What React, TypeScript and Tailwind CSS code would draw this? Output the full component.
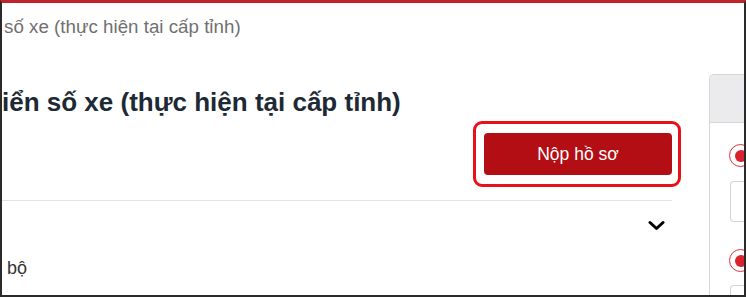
import React from 'react';

function ChevronDown({ className = 'w-[17px] h-[11px]' }: { className?: string }) {
  return (
    <svg className={className} viewBox="0 0 17 11" fill="none" stroke="currentColor">
      <path d="M2 2.5l6.5 6 6.5-6" strokeWidth={3} strokeLinecap="round" strokeLinejoin="round" />
    </svg>
  );
}

function Radio() {
  return (
    <div className="w-[23px] h-[23px] rounded-full border-[1.5px] border-[#d8343a] flex items-center justify-center bg-white">
      <div className="w-[12px] h-[12px] rounded-full bg-[#d9222b]" />
    </div>
  );
}

export default function App() {
  return (
    <div className="relative w-[746px] h-[297px] overflow-hidden bg-white border-x-2 border-b-2 border-t-[3px] border-[#2a2a2a] border-t-[#c0242b] font-['Liberation_Sans',Arial,sans-serif]">
      {/* breadcrumb */}
      <div className="pt-[12px] pl-[2px] text-[18.75px] leading-[24px] text-[#707070] whitespace-nowrap">
        số xe (thực hiện tại cấp tỉnh)
      </div>

      <div className="flex mt-[35px] h-full">
        <div className="w-[670px] shrink-0">
          <h1 className="mt-[12px] text-[26px] leading-[32px] font-bold text-[#1d2935] whitespace-nowrap">
            iển số xe (thực hiện tại cấp tỉnh)
          </h1>

          <div className="flex justify-end mt-[3px]">
            <div className="-mr-[9px] border-[3px] border-[#e8111a] rounded-[9px] pl-[8px] pr-[6px] py-[9px]">
              <button className="w-[188px] h-[42px] rounded-[4px] bg-[#b30e14] text-white text-[17.5px]">
                Nộp hồ sơ
              </button>
            </div>
          </div>

          <div className="mt-[13px] border-t border-[#e3e3e3]" />

          <div className="flex justify-end pr-[7px] mt-[19px] text-black">
            <ChevronDown />
          </div>

          <div className="mt-[25px] pl-[5px] text-[18px] leading-[24px] text-[#333]">bộ</div>
        </div>

        <div className="ml-[37px] w-[60px] shrink-0 border-l border-t border-[#d6d6d6] rounded-tl-[5px] overflow-hidden">
          <div className="h-[48px] bg-[#ebebed] border-b border-[#d6d6d6]" />
          <div className="pl-[19px]">
            <div className="mt-[21px]">
              <Radio />
            </div>
            <div className="mt-[14px] ml-[1px] h-[41px] border border-[#d2d2d2] rounded-l-[4px] border-r-0" />
            <div className="mt-[27px]">
              <Radio />
            </div>
            <div className="mt-[13px] ml-[1px] h-[40px] border border-[#d2d2d2] rounded-l-[4px] border-r-0" />
          </div>
        </div>
      </div>
    </div>
  );
}
